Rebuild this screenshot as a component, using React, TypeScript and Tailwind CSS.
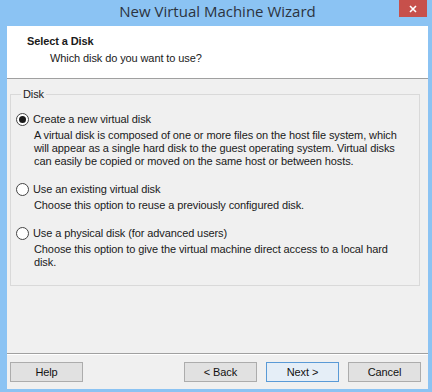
import React from 'react';

const font = { fontFamily: '"Liberation Sans", Arial, sans-serif' };

const Radio: React.FC<{ checked?: boolean }> = ({ checked }) => (
  <span className="flex h-[13px] w-[13px] shrink-0 items-center justify-center rounded-full border border-[#444] bg-white">
    {checked && <span className="h-[7px] w-[7px] rounded-full bg-[#1a1a1a]" />}
  </span>
);

const Option: React.FC<{ label: string; checked?: boolean; children: React.ReactNode }> = ({ label, checked, children }) => (
  <div className="flex flex-col">
    <label className="flex h-[16px] items-center gap-[4px]">
      <Radio checked={checked} />
      <span>{label}</span>
    </label>
    <p className="pl-[18px] pr-[12px] pt-[2px] leading-[13px]">{children}</p>
  </div>
);

const Button: React.FC<{ children: React.ReactNode; primary?: boolean }> = ({ children, primary }) => (
  <button
    className={`h-[20px] w-[73px] border text-[11px] text-[#111] ${
      primary ? 'border-[#5a9ad6] bg-[#e5eef7]' : 'border-[#acacac] bg-[#e1e1e1]'
    }`}
  >
    {children}
  </button>
);

export default function App() {
  return (
    <div
      className="flex h-[392px] w-[432px] flex-col bg-[#8bc3f3] pl-[7px] pr-[4px] pb-[3px] text-[11px] tracking-[-0.1px] text-[#1a1a1a]"
      style={font}
    >
      {/* title bar */}
      <div className="relative flex h-[26px] shrink-0 items-center justify-center pb-[3px]">
        <span className="text-[15px] tracking-normal text-[#2b3340]" style={{ fontFamily: '"Open Sans", sans-serif' }}>
          New Virtual Machine Wizard
        </span>
        <div className="absolute right-[1px] top-0 flex h-[17px] w-[28px] items-center justify-center bg-[#c7504b]">
          <svg width="8" height="8" viewBox="0 0 8 8">
            <path d="M1 1 L7 7 M7 1 L1 7" stroke="white" strokeWidth="1.6" />
          </svg>
        </div>
      </div>

      <div className="flex flex-1 flex-col bg-[#f0f0f0]">
        {/* header */}
        <div className="flex h-[53px] shrink-0 flex-col border-b border-[#a0a0a0] bg-white pl-[20px] pt-[8px]">
          <div className="font-bold leading-[15px]">Select a Disk</div>
          <div className="pl-[23px] pt-[2px] leading-[15px]">Which disk do you want to use?</div>
        </div>

        {/* body */}
        <div className="flex flex-1 flex-col pl-[3px] pr-[8px] pt-[8px]">
          <fieldset className="h-[199px] border border-[#d9d9d9] pl-[5px] pr-[8px]">
            <legend className="ml-[5px] px-[2px] leading-[14px]">Disk</legend>
            <div className="flex flex-col gap-[13px] pt-[10px]">
              <Option label="Create a new virtual disk" checked>
                A virtual disk is composed of one or more files on the host file system, which will appear as a single
                hard disk to the guest operating system. Virtual disks can easily be copied or moved on the same host or
                between hosts.
              </Option>
              <Option label="Use an existing virtual disk">Choose this option to reuse a previously configured disk.</Option>
              <Option label="Use a physical disk (for advanced users)">
                Choose this option to give the virtual machine direct access to a local hard disk.
              </Option>
            </div>
          </fieldset>
        </div>

        {/* footer */}
        <div className="shrink-0 border-t border-[#a0a0a0]">
          <div className="flex items-center border-t border-white pl-[3px] pr-[7px] pt-[7px] pb-[7px]">
            <Button>Help</Button>
            <div className="flex-1" />
            <div className="flex gap-[9px]">
              <Button>&lt; Back</Button>
              <Button primary>Next &gt;</Button>
              <Button>Cancel</Button>
            </div>
          </div>
        </div>
      </div>
    </div>
  );
}
